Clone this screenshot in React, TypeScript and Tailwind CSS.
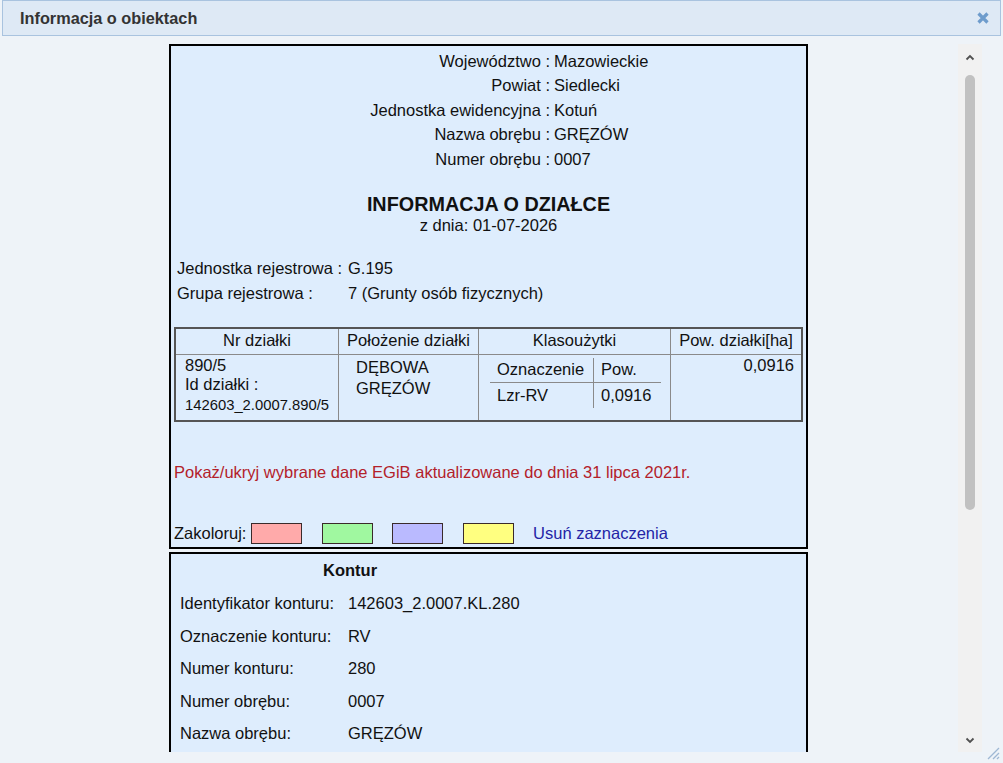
import React from 'react';

const adminRows = [
  ['Województwo :', 'Mazowieckie'],
  ['Powiat :', 'Siedlecki'],
  ['Jednostka ewidencyjna :', 'Kotuń'],
  ['Nazwa obrębu :', 'GRĘZÓW'],
  ['Numer obrębu :', '0007'],
];

const konturRows = [
  ['Identyfikator konturu:', '142603_2.0007.KL.280'],
  ['Oznaczenie konturu:', 'RV'],
  ['Numer konturu:', '280'],
  ['Numer obrębu:', '0007'],
  ['Nazwa obrębu:', 'GRĘZÓW'],
];

const swatches = ['bg-[#ffaaaa]', 'bg-[#a0f8a0]', 'bg-[#babaff]', 'bg-[#ffff80]'];

const Chevron = ({ down }: { down?: boolean }) => (
  <svg width="10" height="7" viewBox="0 0 10 7" className={down ? 'rotate-180' : ''}>
    <path d="M1.5 5.5 L5 2 L8.5 5.5" fill="none" stroke="#505050" strokeWidth="1.8" />
  </svg>
);

export default function App() {
  return (
    <div className="relative w-[1003px] h-[763px] overflow-hidden bg-[#eef3f8] font-['Liberation_Sans',Arial,sans-serif] text-[16.5px] text-[#111]">
      {/* title bar */}
      <div className="mx-[2px] h-[36px] border border-[#a9c3df] bg-[#dee9f5] flex items-center justify-between pl-[17px] pr-[11px]">
        <span className="text-[16.3px] font-bold text-[#333]">Informacja o obiektach</span>
        <svg width="12" height="12" viewBox="0 0 12 12">
          <path d="M1.5 1.5 L10.5 10.5 M10.5 1.5 L1.5 10.5" stroke="#6e9ccc" strokeWidth="3.2" />
        </svg>
      </div>

      <div className="flex h-[708px] mt-[8px]">
        <div className="w-[958px] overflow-hidden pl-[169px]">
          <div className="w-[639px]">
            {/* działka */}
            <div className="border-2 border-black bg-[#deedfd] pb-[3px]">
              <div className="pt-[3px]">
                {adminRows.map(([label, value]) => (
                  <div key={label} className="flex h-[24.5px] items-center">
                    <span className="w-[379px] text-right">{label}</span>
                    <span className="pl-[4px]">{value}</span>
                  </div>
                ))}
              </div>

              <div className="mt-[21px] text-center">
                <div className="text-[19.8px] font-bold leading-[23px]">INFORMACJA O DZIAŁCE</div>
                <div className="leading-[19px]">z dnia: 01-07-2026</div>
              </div>

              <div className="mt-[22px] pl-[6px]">
                <div className="flex h-[24.5px] items-center">
                  <span className="w-[171px]">Jednostka rejestrowa :</span>
                  <span>G.195</span>
                </div>
                <div className="flex h-[24.5px] items-center">
                  <span className="w-[171px]">Grupa rejestrowa :</span>
                  <span>7 (Grunty osób fizycznych)</span>
                </div>
              </div>

              {/* tabela */}
              <div className="mx-[3px] mt-[21px] border-2 border-[#555] grid grid-cols-[163px_140px_192px_130px]">
                <div className="h-[26px] border-r border-b border-[#8a8a8a] flex items-center justify-center pb-[2px]">Nr działki</div>
                <div className="h-[26px] border-r border-b border-[#8a8a8a] flex items-center justify-center pb-[2px]">Położenie działki</div>
                <div className="h-[26px] border-r border-b border-[#8a8a8a] flex items-center justify-center pb-[2px]">Klasoużytki</div>
                <div className="h-[26px] border-b border-[#8a8a8a] flex items-center justify-center pb-[2px]">Pow. działki[ha]</div>

                <div className="h-[65px] border-r border-[#8a8a8a] pl-[9px] pt-[1.5px] leading-[19px]">
                  <div>890/5</div>
                  <div>Id działki :</div>
                  <div className="text-[14.8px] leading-[22px]">142603_2.0007.890/5</div>
                </div>
                <div className="h-[65px] border-r border-[#8a8a8a] pl-[17px] pt-[2.5px] leading-[21px]">
                  <div>DĘBOWA</div>
                  <div>GRĘZÓW</div>
                </div>
                <div className="h-[65px] border-r border-[#8a8a8a] pl-[11px] pt-[3px]">
                  <div className="w-[171px] grid grid-cols-[104px_67px]">
                    <div className="h-[25px] border-r border-b border-[#8a8a8a] pl-[7px] flex items-center">Oznaczenie</div>
                    <div className="h-[25px] border-b border-[#8a8a8a] pl-[7px] flex items-center">Pow.</div>
                    <div className="h-[25px] border-r border-[#8a8a8a] pl-[7px] flex items-center">Lzr-RV</div>
                    <div className="h-[25px] pl-[7px] flex items-center">0,0916</div>
                  </div>
                </div>
                <div className="h-[65px] pr-[7px] pt-[1.5px] leading-[19px] text-right">0,0916</div>
              </div>

              <div className="mt-[41.5px] pl-[3px] leading-[19px] text-[#b3212a]">
                Pokaż/ukryj wybrane dane EGiB aktualizowane do dnia 31 lipca 2021r.
              </div>

              <div className="mt-[40.5px] pl-[3px] flex items-center h-[21px]">
                <span className="w-[77px]">Zakoloruj:</span>
                <div className="flex gap-[19.7px]">
                  {swatches.map((c) => (
                    <div key={c} className={`w-[51px] h-[21px] border border-[#3a2a2a] ${c}`} />
                  ))}
                </div>
                <span className="ml-[19px] text-[#2424a6]">Usuń zaznaczenia</span>
              </div>
            </div>

            {/* kontur */}
            <div className="mt-[3px] border-2 border-black bg-[#deedfd] pt-[7.5px] pb-[60px]">
              <div className="pl-[152px] font-bold leading-[19px]">Kontur</div>
              <div className="mt-[7.25px] pl-[9px]">
                {konturRows.map(([label, value]) => (
                  <div key={label} className="flex h-[32.5px] items-center">
                    <span className="w-[168px]">{label}</span>
                    <span>{value}</span>
                  </div>
                ))}
              </div>
            </div>
          </div>
        </div>

        {/* scrollbar */}
        <div className="w-[24px] bg-[#f1f1f1] flex flex-col items-center pt-[10px] pb-[8px]">
          <Chevron />
          <div className="mt-[14px] w-[10px] h-[435px] rounded-full bg-[#c1c1c1]" />
          <div className="flex-1" />
          <Chevron down />
        </div>
      </div>

      <svg width="16" height="16" viewBox="0 0 16 16" className="absolute right-[3px] bottom-[3px]">
        <path d="M15 4 L4 15 M15 9 L9 15 M15 13 L13 15" stroke="#9fb8d4" strokeWidth="1.3" />
      </svg>
    </div>
  );
}
